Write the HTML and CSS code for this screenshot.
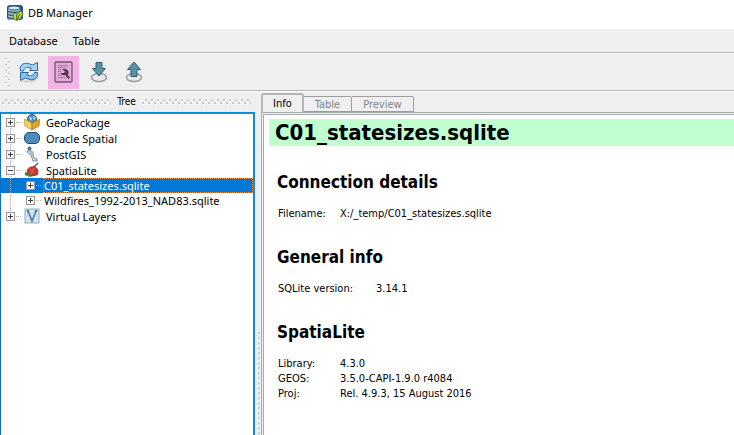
FILE: index.html
```html
<!DOCTYPE html>
<html lang="en">
<head>
<meta charset="utf-8">
<title>DB Manager</title>
<link rel="stylesheet" href="styles.css">
</head>
<body>
<header class="titlebar">
  <svg class="app-icon" width="18" height="18" viewBox="0 0 18 18" aria-hidden="true">
    <rect x="1" y="1" width="16" height="15" rx="3" fill="#25577f"/>
    <path d="M2 4v10c0 3 12 3 12 0V4z" fill="#a9c3d4"/>
    <ellipse cx="8" cy="4" rx="6" ry="2" fill="#dce9f0" stroke="#275778"/>
    <path d="M2 7c1 2 11 2 12 0M2 10c1 2 11 2 12 0M2 13c1 2 11 2 12 0" fill="none" stroke="#275778" stroke-width="1.4"/>
    <path d="M7 10l3-1 1 8-3-2zM11 16c-1-5 1-8 5-9 1 5-1 8-5 9z" fill="#c9dc38" stroke="#52751d" stroke-width=".7"/>
    <path d="M11 16l3-6" stroke="#34551b"/>
  </svg>
  <h1 class="app-title">DB Manager</h1>
</header>
<nav class="menubar">
  <button class="menu-item" type="button">Database</button>
  <button class="menu-item" type="button">Table</button>
</nav>
<div class="toolbar" role="toolbar" aria-label="Database tools">
  <svg class="grip" width="6" height="30" aria-hidden="true">
    <defs><pattern id="grip-dots" width="6" height="6" patternUnits="userSpaceOnUse"><path d="M0 1h2v1H0zM3 4h2v1H3z" fill="#bcbcbc"/><path d="M1 2h2v1H1zM4 5h2v1H4z" fill="#fff"/></pattern></defs>
    <rect width="6" height="30" fill="url(#grip-dots)"/>
  </svg>
  <button class="tool" type="button" aria-label="Refresh">
    <svg width="20" height="22" viewBox="0 0 20 22">
      <ellipse cx="10" cy="20" rx="7" ry="1.500" fill="#d4d4d4"/>
      <path d="M1.500 10C0 3 6 .5 12 3.500L13.500 4 18.500 1.500v8h-8l2-2.500C9 5.500 5 6.500 4.500 10z" fill="#a9d4f1" stroke="#2a6ba4"/>
      <path d="M18.500 11.500C20 18 14 20.500 8 17.500L6.500 17l-5 2.500v-8h8l-2 2.500c3.500 1.500 7.500.5 8-2.500z" fill="#8cc2ea" stroke="#2a6ba4"/>
    </svg>
  </button>
  <button class="tool tool-marked" type="button" aria-label="SQL window">
    <svg width="19" height="22" viewBox="0 0 19 22">
      <rect x="1" y="1" width="17" height="20" rx="1" fill="#e4a9da" stroke="#775670" stroke-width="1.3"/>
      <path d="M4 4.500h10M4 6.500h8M4 8.500h3M4 10.500h3M4 12.500h4M4 14.500h4M4 16.500h8" stroke="#9b6c94" stroke-width=".8"/>
      <path d="M8 8h4l2.500 2v3l-1 .5L16 16.500 14.500 18 11 14H8l-1-2h3l1-1.500z" fill="#513849"/>
    </svg>
  </button>
  <button class="tool" type="button" aria-label="Import layer or file">
    <svg width="18" height="22" viewBox="0 0 18 22">
      <ellipse cx="9" cy="16.500" rx="7.500" ry="4" fill="#e9e9e9" stroke="#999" stroke-width="1.400"/>
      <path d="M6 1.500h6v6h3.500L9 15 2.500 7.500H6z" fill="#5793a8" stroke="#345c70"/>
    </svg>
  </button>
  <button class="tool" type="button" aria-label="Export to file">
    <svg width="18" height="22" viewBox="0 0 18 22">
      <ellipse cx="9" cy="16.500" rx="7.500" ry="4" fill="#e9e9e9" stroke="#999" stroke-width="1.400"/>
      <path d="M6 15.500h6v-7h3.500L9 1 2.500 8.500H6z" fill="#5793a8" stroke="#345c70"/>
    </svg>
  </button>
</div>
<main class="workspace">
  <section class="dock" aria-label="Tree">
    <div class="dock-title">
      <svg class="dots" height="6" aria-hidden="true"><defs><pattern id="title-dots" width="6" height="6" patternUnits="userSpaceOnUse"><path d="M3 0h2v2H3zM0 3h2v2H0z" fill="#c8c8c8"/><path d="M4 2h2v1H4zM1 5h2v1H1z" fill="#fff"/></pattern></defs><rect width="100%" height="6" fill="url(#title-dots)"/></svg>
      <h2 class="dock-name">Tree</h2>
      <svg class="dots" height="6" aria-hidden="true"><rect width="100%" height="6" fill="url(#title-dots)"/></svg>
    </div>
    <ul class="tree" role="tree">
      <li class="node"><span class="expander"></span>
        <svg class="icon" viewBox="0 0 16 16"><circle cx="8" cy="5" r="4.500" fill="#4d8dc0" stroke="#31516b"/><path d="M5 3l3 1-1 3zM9 2l3 2-2 2z" fill="#d7e6ed"/><path d="M0 5l8 4v7l-7-4z" fill="#f6d354" stroke="#a9822b" stroke-width=".6"/><path d="M16 5l-8 4v7l7-4z" fill="#dda62b" stroke="#96701f" stroke-width=".6"/></svg>
        <span class="name">GeoPackage</span></li>
      <li class="node"><span class="expander"></span>
        <svg class="icon" viewBox="0 0 16 16"><rect x=".5" y="2.500" width="15" height="11" rx="4.500" fill="#4e8cba" stroke="#234e72"/></svg>
        <span class="name">Oracle Spatial</span></li>
      <li class="node"><span class="expander"></span>
        <svg class="icon" viewBox="0 0 16 16"><path d="M3 5c3-1 7 0 6 3l1 4 3 1v2H9L7 9 4 7z" fill="#d5dce0" stroke="#78858e" stroke-width=".9"/><circle cx="5.500" cy="2.500" r="2" fill="#44789a"/><path d="M6 5l3 5" stroke="#9ba8b1"/></svg>
        <span class="name">PostGIS</span></li>
      <li class="node"><span class="expander open"></span>
        <svg class="icon" viewBox="0 0 16 16"><path d="M1 12l5 2 8-2" fill="none" stroke="#4b8b43" stroke-width="2"/><path d="M9 6l5-5" stroke="#555f4c" stroke-width="1.500"/><path d="M3 10c0-4 4-6 8-5 4 2 4 7 0 8-3 1-6 0-8-3z" fill="#c93931" stroke="#872a27" stroke-width=".7"/><path d="M1 10l5 2-4 1z" fill="#4e5b3c"/><path d="M6 7l4 4M10 6l-3 6" stroke="#e26b55"/></svg>
        <span class="name">SpatiaLite</span></li>
      <li class="node child selected" aria-selected="true"><span class="expander"></span><span class="name">C01_statesizes.sqlite</span></li>
      <li class="node child"><span class="expander"></span><span class="name">Wildfires_1992-2013_NAD83.sqlite</span></li>
      <li class="node last"><span class="expander"></span>
        <svg class="icon" viewBox="0 0 16 16"><rect x="1" y="1" width="14" height="14" fill="#d4e3ed" stroke="#91adbd"/><path d="M4 3l4 10 4-10" fill="none" stroke="#4a7c9d" stroke-width="1.600"/><circle cx="4" cy="3" r="1.300" fill="#4a7c9d"/><circle cx="12" cy="3" r="1.300" fill="#4a7c9d"/></svg>
        <span class="name">Virtual Layers</span></li>
    </ul>
  </section>
  <div class="splitter"></div>
  <section class="details">
    <div class="tabs" role="tablist">
      <button class="tab active" type="button" role="tab" aria-selected="true">Info</button>
      <button class="tab" type="button" role="tab">Table</button>
      <button class="tab" type="button" role="tab">Preview</button>
    </div>
    <article class="page">
      <h2 class="db-name">C01_statesizes.sqlite</h2>
      <h3 class="heading">Connection details</h3>
      <table class="facts"><tbody>
        <tr><th scope="row">Filename:</th><td>X:/_temp/C01_statesizes.sqlite</td></tr>
      </tbody></table>
      <h3 class="heading">General info</h3>
      <table class="facts"><tbody>
        <tr><th class="wide" scope="row">SQLite version:</th><td>3.14.1</td></tr>
      </tbody></table>
      <h3 class="heading">SpatiaLite</h3>
      <table class="facts"><tbody>
        <tr><th scope="row">Library:</th><td>4.3.0</td></tr>
        <tr><th scope="row">GEOS:</th><td>3.5.0-CAPI-1.9.0 r4084</td></tr>
        <tr><th scope="row">Proj:</th><td>Rel. 4.9.3, 15 August 2016</td></tr>
      </tbody></table>
    </article>
  </section>
</main>
</body>
</html>
```
FILE: styles.css
```css
* { box-sizing: border-box; }
body {
  margin: 0;
  height: 100vh;
  display: flex;
  flex-direction: column;
  overflow: hidden;
  background: #efefef;
  color: #000;
  font: 11px/15px "Noto Sans", "Open Sans", sans-serif;
}
h1, h2, h3, ul { margin: 0; padding: 0; font: inherit; }
button { margin: 0; padding: 0; border: 0; background: none; color: inherit; font: inherit; }
svg { display: block; flex: none; }

.titlebar {
  display: flex;
  align-items: center;
  gap: 4px;
  height: 29px;
  padding: 0 6px 4px;
  background: #fff;
}
.menubar {
  display: flex;
  gap: 15px;
  height: 24px;
  padding: 0 9px;
  border-bottom: 1px solid #b4b6b8;
}
.toolbar {
  display: flex;
  align-items: center;
  height: 38px;
  padding-left: 5px;
  border-top: 1px solid #fff;
  border-bottom: 1px solid #b4b6b8;
}
.tool {
  display: flex;
  align-items: center;
  justify-content: center;
  width: 31px;
  height: 33px;
  margin-right: 4px;
}
.grip { margin-right: 2px; }
.tool-marked { background: #f2b4e6; }

.workspace {
  flex: 1;
  display: flex;
  min-height: 0;
  border-top: 1px solid #fff;
}
.dock {
  flex: none;
  width: 255px;
  display: flex;
  flex-direction: column;
}
.dock-title {
  display: flex;
  align-items: center;
  gap: 6px;
  height: 20px;
  padding: 0 4px 0 2px;
  font: 10px/14px "DejaVu Sans Condensed", "DejaVu Sans", sans-serif;
}
.dots { flex: 1; min-width: 0; }
.tree {
  flex: 1;
  list-style: none;
  background: #fff;
  border: 2px solid #0b8fd6;
  border-left: 1px solid #0a6fc0;
  border-bottom: 0;
}
.node {
  display: flex;
  align-items: center;
  height: 16px;
  padding-left: 5px;
  background:
    repeating-linear-gradient(90deg, #b0b0b0 0 1px, transparent 1px 2px) 15px 8px / 6px 1px no-repeat,
    repeating-linear-gradient(#b0b0b0 0 1px, transparent 1px 2px) 9px 0 / 1px 100% no-repeat;
  white-space: nowrap;
}
.node.last { background-size: 6px 1px, 1px 50%; }
.node .icon { width: 16px; height: 16px; margin: 0 6px 0 9px; }
.node.child {
  height: 15px;
  padding-left: 25px;
  background-position: 35px 7px, 9px 0;
}
.node.child .name { flex: 1; margin-left: 8px; line-height: 13px; border: 1px solid transparent; }
.node.selected { background-color: #0078d7; color: #fff; }
.node.selected .name { border: 1px dotted #e8924a; }
.expander {
  flex: none;
  width: 9px;
  height: 9px;
  border: 1px solid #979797;
  background:
    linear-gradient(#444, #444) center / 5px 1px no-repeat,
    linear-gradient(#444, #444) center / 1px 5px no-repeat,
    #fff;
}
.expander.open { background: linear-gradient(#444, #444) center / 5px 1px no-repeat, #fff; }
.splitter {
  flex: none;
  width: 6px;
  display: flex;
  align-items: flex-end;
}
.splitter::after {
  content: "";
  width: 6px;
  height: 31%;
  background: radial-gradient(circle, #c0c0c0 1px, transparent 1px) center bottom / 5px 5px repeat-y;
}

.details {
  flex: 1;
  min-width: 0;
  display: flex;
  flex-direction: column;
  padding-top: 1px;
}
.tabs { display: flex; align-items: flex-end; height: 19px; }
.tab {
  height: 16px;
  padding: 0 11px;
  border: 1px solid #9c9ea0;
  border-left: 0;
  border-radius: 0 2px 0 0;
  color: #808488;
  font: 11px/15px "DejaVu Sans Condensed", "DejaVu Sans", sans-serif;
}
.tab.active {
  height: 19px;
  padding: 0 10px;
  border: 2px solid #b4b6b8;
  border-bottom: 0;
  border-radius: 3px 3px 0 0;
  color: #000;
}
.page {
  flex: 1;
  padding: 4px 0 0 5px;
  background: #fff;
  border: 3px double #a9abad;
  border-right: 0;
  border-bottom: 0;
  background-clip: padding-box;
  font: 11px/15px "DejaVu Sans Condensed", "DejaVu Sans", sans-serif;
}
.db-name {
  padding-left: 6px;
  background: #c0ffd0;
  font: bold 22px/27px "DejaVu Sans Condensed", "DejaVu Sans", sans-serif;
}
.heading {
  margin: 26px 0 14px 8px;
  font: bold 17px/20px "DejaVu Sans Condensed", "DejaVu Sans", sans-serif;
}
.facts { margin-left: 9px; border-collapse: collapse; }
.facts th, .facts td { padding: 0; font-weight: normal; text-align: left; }
.facts th { width: 62px; }
.facts th.wide { width: 98px; }
```
